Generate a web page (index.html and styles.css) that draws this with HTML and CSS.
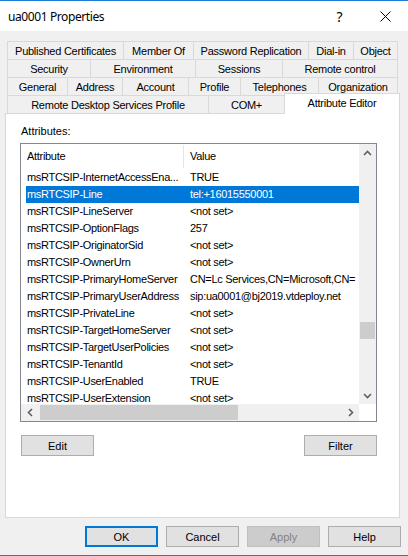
FILE: index.html
```html
<!DOCTYPE html>
<html>
<head>
<meta charset="utf-8">
<link rel="stylesheet" href="styles.css">
</head>
<body>
<div class="titlebar">
  <span class="title">ua0001 Properties</span>
  <span class="cap cap-help">?</span>
  <span class="cap cap-close"><svg width="11" height="11" viewBox="0 0 11 11"><path d="M0.5 0.5 L10.5 10.5 M10.5 0.5 L0.5 10.5" stroke="#000" stroke-width="1" fill="none"/></svg></span>
</div>
<div class="main">
  <div class="tabs">
    <div class="tabrow">
      <div class="tab w116">Published Certificates</div>
      <div class="tab w70">Member Of</div>
      <div class="tab w115">Password Replication</div>
      <div class="tab w45">Dial-in</div>
      <div class="tab w44">Object</div>
    </div>
    <div class="tabrow">
      <div class="tab w83">Security</div>
      <div class="tab w105">Environment</div>
      <div class="tab w87">Sessions</div>
      <div class="tab w115">Remote control</div>
    </div>
    <div class="tabrow">
      <div class="tab w60">General</div>
      <div class="tab w55">Address</div>
      <div class="tab w66">Account</div>
      <div class="tab w52">Profile</div>
      <div class="tab w78">Telephones</div>
      <div class="tab w79">Organization</div>
    </div>
    <div class="tabrow">
      <div class="tab w201">Remote Desktop Services Profile</div>
      <div class="tab w76">COM+</div>
      <div class="tab tab-sel">Attribute Editor</div>
    </div>
  </div>
  <div class="panel">
    <div class="label">Attributes:</div>
    <div class="listbox">
      <div class="lv-main">
        <div class="lv-content">
          <div class="lv-header">
            <div class="hcell1">Attribute</div>
            <div class="hcell2">Value</div>
          </div>
          <div class="row"><div class="c1">msRTCSIP-InternetAccessEna...</div><div class="c2">TRUE</div></div>
          <div class="row sel"><div class="c1">msRTCSIP-Line</div><div class="c2">tel:+16015550001</div></div>
          <div class="row"><div class="c1">msRTCSIP-LineServer</div><div class="c2">&lt;not set&gt;</div></div>
          <div class="row"><div class="c1">msRTCSIP-OptionFlags</div><div class="c2">257</div></div>
          <div class="row"><div class="c1">msRTCSIP-OriginatorSid</div><div class="c2">&lt;not set&gt;</div></div>
          <div class="row"><div class="c1">msRTCSIP-OwnerUrn</div><div class="c2">&lt;not set&gt;</div></div>
          <div class="row"><div class="c1">msRTCSIP-PrimaryHomeServer</div><div class="c2">CN=Lc Services,CN=Microsoft,CN=</div></div>
          <div class="row"><div class="c1">msRTCSIP-PrimaryUserAddress</div><div class="c2">sip:ua0001@bj2019.vtdeploy.net</div></div>
          <div class="row"><div class="c1">msRTCSIP-PrivateLine</div><div class="c2">&lt;not set&gt;</div></div>
          <div class="row"><div class="c1">msRTCSIP-TargetHomeServer</div><div class="c2">&lt;not set&gt;</div></div>
          <div class="row"><div class="c1">msRTCSIP-TargetUserPolicies</div><div class="c2">&lt;not set&gt;</div></div>
          <div class="row"><div class="c1">msRTCSIP-TenantId</div><div class="c2">&lt;not set&gt;</div></div>
          <div class="row"><div class="c1">msRTCSIP-UserEnabled</div><div class="c2">TRUE</div></div>
          <div class="row"><div class="c1">msRTCSIP-UserExtension</div><div class="c2">&lt;not set&gt;</div></div>
        </div>
        <div class="vscroll">
          <div class="sbtn"><svg width="9" height="6" viewBox="0 0 9 6"><path d="M1 5 L4.5 1.5 L8 5" stroke="#606060" stroke-width="1.6" fill="none"/></svg></div>
          <div class="vthumb"></div>
          <div class="spacer"></div>
          <div class="sbtn"><svg width="9" height="6" viewBox="0 0 9 6"><path d="M1 1 L4.5 4.5 L8 1" stroke="#606060" stroke-width="1.6" fill="none"/></svg></div>
        </div>
      </div>
      <div class="hrow">
        <div class="hscroll">
          <div class="sbtn"><svg width="6" height="9" viewBox="0 0 6 9"><path d="M5 1 L1.5 4.5 L5 8" stroke="#606060" stroke-width="1.6" fill="none"/></svg></div>
          <div class="hthumb"></div>
          <div class="spacer"></div>
          <div class="sbtn"><svg width="6" height="9" viewBox="0 0 6 9"><path d="M1 1 L4.5 4.5 L1 8" stroke="#606060" stroke-width="1.6" fill="none"/></svg></div>
        </div>
        <div class="corner"></div>
      </div>
    </div>
    <div class="btnrow">
      <div class="btn">Edit</div>
      <div class="btn">Filter</div>
    </div>
  </div>
  <div class="footer">
    <div class="btn btn-default">OK</div>
    <div class="btn">Cancel</div>
    <div class="btn btn-disabled">Apply</div>
    <div class="btn">Help</div>
  </div>
  <div class="spacer"></div>
  <div class="bottomline"></div>
</div>
</body>
</html>
```
FILE: styles.css
```css
html, body {
  margin: 0;
  padding: 0;
}
body {
  width: 408px;
  height: 556px;
  overflow: hidden;
  background: #f0f0f0;
  font-family: "Liberation Sans", Arial, sans-serif;
  font-size: 11px;
  color: #000;
  display: flex;
  flex-direction: column;
}
.titlebar {
  height: 30px;
  border-top: 1px solid #1a7dd7;
  background: #fff;
  display: flex;
  align-items: center;
  flex: none;
}
.title {
  flex: 1;
  margin-left: 8px;
  font-family: "Noto Sans", sans-serif;
  font-size: 12px;
  letter-spacing: -0.4px;
}
.cap {
  width: 45px;
  height: 30px;
  display: flex;
  align-items: center;
  justify-content: center;
}
.cap-help {
  font-family: "Noto Sans", sans-serif;
  font-size: 14px;
  width: 46px;
  padding-left: 1px;
  box-sizing: border-box;
}
.cap-close {
  width: 46px;
}
.main {
  flex: 1;
  display: flex;
  flex-direction: column;
}
.tabs {
  margin: 10px 0 0 7px;
  width: 391px;
}
.tabrow {
  display: flex;
  height: 18px;
  border-left: 1px solid #d9d9d9;
  box-sizing: border-box;
}
.tab {
  box-sizing: border-box;
  height: 18px;
  border-top: 1px solid #d9d9d9;
  border-right: 1px solid #d9d9d9;
  display: flex;
  align-items: center;
  justify-content: center;
  white-space: nowrap;
  letter-spacing: -0.25px;
  flex: none;
}
.w44 { width: 44px; }
.w45 { width: 45px; }
.w52 { width: 52px; }
.w55 { width: 55px; }
.w60 { width: 60px; }
.w66 { width: 66px; }
.w70 { width: 70px; }
.w76 { width: 76px; }
.w78 { width: 78px; }
.w79 { width: 79px; }
.w83 { width: 83px; }
.w87 { width: 87px; }
.w105 { width: 105px; }
.w115 { width: 115px; }
.w116 { width: 116px; }
.w201 { width: 201px; }
.tab-sel {
  width: 116px;
  height: 21px;
  margin-left: -1px;
  margin-top: -2px;
  border-left: 1px solid #d9d9d9;
  background: #fff;
  position: relative;
  z-index: 1;
  padding-bottom: 3px;
}
.panel {
  margin-left: 5px;
  width: 395px;
  height: 405px;
  box-sizing: border-box;
  border: 1px solid #d9d9d9;
  background: #fff;
  flex: none;
}
.label {
  margin: 11px 0 5px 15px;
  height: 13px;
  line-height: 13px;
}
.listbox {
  margin-left: 14px;
  width: 357px;
  height: 279px;
  box-sizing: border-box;
  border: 1px solid #828790;
  display: flex;
  flex-direction: column;
}
.lv-main {
  display: flex;
  height: 260px;
}
.lv-content {
  width: 338px;
  overflow: hidden;
  letter-spacing: -0.3px;
}
.lv-header {
  height: 25px;
  display: flex;
  padding-left: 5px;
}
.hcell1 {
  width: 158px;
  box-sizing: border-box;
  height: 23px;
  margin-top: 1px;
  line-height: 23px;
  padding-left: 1px;
  border-right: 1px solid #e5e5e5;
}
.hcell2 {
  padding-left: 6px;
  line-height: 25px;
}
.row {
  display: flex;
  height: 17px;
  line-height: 17px;
  margin-left: 5px;
  white-space: nowrap;
}
.row.sel {
  background: #0078d7;
  color: #fff;
}
.c1 {
  width: 158px;
  flex: none;
  box-sizing: border-box;
  padding-left: 1px;
  overflow: hidden;
}
.c2 {
  flex: 1;
  padding-left: 6px;
  overflow: hidden;
}
.vscroll {
  width: 17px;
  background: #f0f0f0;
  display: flex;
  flex-direction: column;
}
.sbtn {
  width: 17px;
  height: 17px;
  display: flex;
  align-items: center;
  justify-content: center;
  flex: none;
}
.vthumb {
  margin: 161px 0 0 1px;
  width: 15px;
  height: 17px;
  background: #cdcdcd;
  flex: none;
}
.spacer {
  flex: 1;
}
.hrow {
  display: flex;
  height: 17px;
}
.hscroll {
  width: 338px;
  background: #f0f0f0;
  display: flex;
}
.hthumb {
  margin: 1px 0 0 2px;
  width: 198px;
  height: 15px;
  background: #cdcdcd;
  flex: none;
}
.corner {
  width: 17px;
  background: #fff;
}
.btnrow {
  display: flex;
  justify-content: space-between;
  margin: 13px 22px 0 15px;
}
.btn {
  width: 73px;
  height: 21px;
  box-sizing: border-box;
  border: 1px solid #adadad;
  background: #e1e1e1;
  display: flex;
  align-items: center;
  justify-content: center;
  flex: none;
}
.footer {
  display: flex;
  justify-content: flex-end;
  gap: 8px;
  margin-top: 8px;
  padding-right: 7px;
}
.btn-default {
  border: 2px solid #0078d7;
}
.btn-disabled {
  background: #cccccc;
  border-color: #bfbfbf;
  color: #838383;
}
.bottomline {
  height: 1px;
  background: #1a7dd7;
  flex: none;
}
```
